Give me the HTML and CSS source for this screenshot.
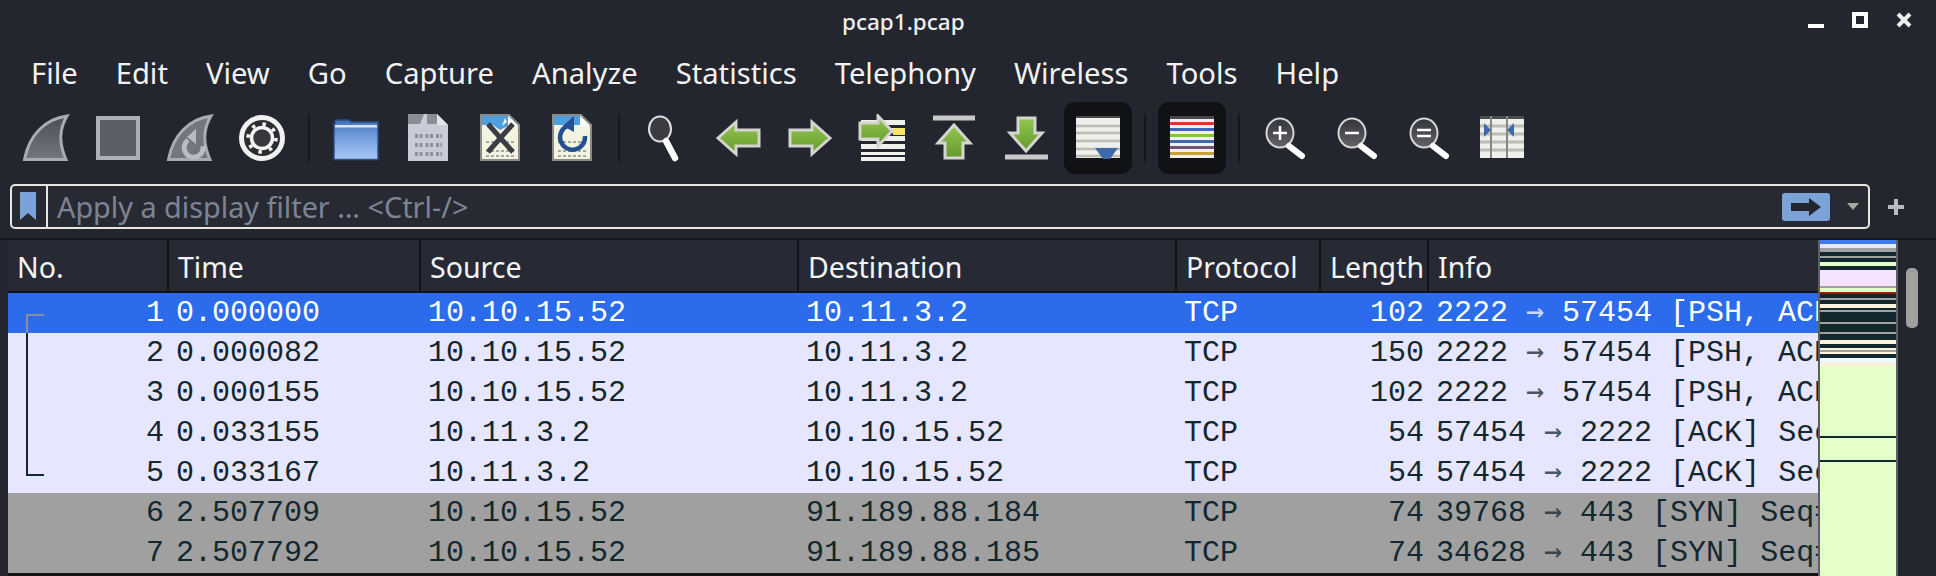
FILE: index.html
```html
<!DOCTYPE html>
<html lang="en">
<head>
<meta charset="utf-8">
<title>pcap1.pcap</title>
<link rel="stylesheet" href="styles.css">
</head>
<body>
<svg class="defs" width="0" height="0" aria-hidden="true">
  <defs>
    <linearGradient id="fin" x1="0" y1="0" x2="0" y2="1"><stop offset="0" stop-color="#4d4f58"/><stop offset="1" stop-color="#74767e"/></linearGradient>
    <linearGradient id="fold" x1="0" y1="0" x2="0" y2="1"><stop offset="0" stop-color="#3f70b8"/><stop offset=".35" stop-color="#6a97da"/><stop offset="1" stop-color="#a9c8f6"/></linearGradient>
    <linearGradient id="grn" x1="0" y1="0" x2="0" y2="1"><stop offset="0" stop-color="#94c653"/><stop offset="1" stop-color="#64992a"/></linearGradient>
    <linearGradient id="lens" x1="0" y1="0" x2="0" y2="1"><stop offset="0" stop-color="#33353b"/><stop offset="1" stop-color="#63646a"/></linearGradient>
  </defs>
</svg>
<div class="window">
  <header class="titlebar">
    <span class="title">pcap1.pcap</span>
    <div class="winctl">
      <svg width="16" height="16" viewBox="0 0 16 16"><rect y="12" width="16" height="4" fill="#fff"/></svg>
      <svg width="16" height="16" viewBox="0 0 16 16"><rect x="2" y="2" width="12" height="12" fill="none" stroke="#fff" stroke-width="4"/></svg>
      <svg width="16" height="16" viewBox="0 0 16 16"><path d="M2 2 14 14M14 2 2 14" stroke="#eee" stroke-width="4"/></svg>
    </div>
  </header>
  <nav class="menubar">
    <span>File</span><span>Edit</span><span>View</span><span>Go</span><span>Capture</span><span>Analyze</span><span>Statistics</span><span>Telephony</span><span>Wireless</span><span>Tools</span><span>Help</span>
  </nav>
  <div class="toolbar">
    <div class="tool"><svg class="ico" viewBox="0 0 48 48"><path d="M45 2C23 5 7 21 2.500 45.500H44C37 30 37 15 45 2Z" fill="url(#fin)" stroke="#a9abb5" stroke-width="3"/></svg></div>
    <div class="tool"><svg class="ico" viewBox="0 0 48 48"><rect x="4" y="4" width="40" height="40" fill="#5d5f67" stroke="#adb0bb" stroke-width="4"/></svg></div>
    <div class="tool"><svg class="ico" viewBox="0 0 48 48"><path d="M45 2C23 5 7 21 2.500 45.500H44C37 30 37 15 45 2Z" fill="#74767f" stroke="#a9abb5" stroke-width="3"/><path d="M22 26a9.500 9.500 0 1 0 15 6" fill="none" stroke="#b9bbc5" stroke-width="5"/><path d="M30 15v15l-9-7z" fill="#b9bbc5"/></svg></div>
    <div class="tool"><svg class="ico" viewBox="0 0 48 48"><circle cx="24" cy="24" r="20.500" fill="#2c2d31" stroke="#f1f1f1" stroke-width="5"/><circle cx="24" cy="24" r="10.500" fill="#37383c" stroke="#f4f4f4" stroke-width="3.500"/><circle cx="24" cy="24" r="14" fill="none" stroke="#f4f4f4" stroke-width="3.500" stroke-dasharray="3.500 7.500"/></svg></div>
    <div class="sep"></div>
    <div class="tool"><svg class="ico" viewBox="0 0 48 48"><path d="M3 10V7.500Q3 6 5 6H16Q18 6 19 8H46V45.500H2V10Z" fill="url(#fold)" stroke="#2c4f86" stroke-width="1.500"/><rect x="3" y="11" width="42" height="2.500" fill="#d9e6f8"/></svg></div>
    <div class="tool"><svg class="ico" viewBox="0 0 48 48"><path d="M4 0H33L44 11V47H4Z" fill="#c9cbd6"/><path d="M4 0H20L16 10H4ZM23 0H33L38 5 36 10H23Z" fill="#8c8d97"/><path d="M33 0 44 11H33Z" fill="#e4e5ec"/><path d="M11 21H38M11 23H38M11 30H38M11 32H38M11 39H38M11 41H38" stroke="#8f909a" stroke-width="2" stroke-dasharray="3 1.500 3 3"/></svg></div>
    <div class="tool"><svg class="ico" viewBox="0 0 48 48"><path d="M5 1H33L43 11V46H5Z" fill="#f2f3e0" stroke="#8a8b84" stroke-width="2"/><path d="M6 2H32L34 11 24 16 17 11H6Z" fill="#4d9fe0"/><path d="M29 4 26 12 31 8Z" fill="#f2f3e0"/><path d="M32 2 42 12H32Z" fill="#fff"/><path d="M10 28H38M10 37H38M10 42H38" stroke="#a7a89f" stroke-width="2" stroke-dasharray="3 2"/><path d="M12 10 37 38M37 10 12 38" stroke="#3a3d44" stroke-width="5"/></svg></div>
    <div class="tool"><svg class="ico" viewBox="0 0 48 48"><path d="M5 1H33L43 11V46H5Z" fill="#f2f3e0" stroke="#8a8b84" stroke-width="2"/><path d="M6 2H32L34 11H6Z" fill="#4d9fe0"/><path d="M32 2 42 12H32Z" fill="#fff"/><path d="M10 28H38M10 37H38M10 42H38" stroke="#a7a89f" stroke-width="2" stroke-dasharray="3 2"/><path d="M19 12A12.500 12.500 0 1 0 37 22" fill="none" stroke="#24508f" stroke-width="4.500"/><path d="M26 2V18L15 12Z" fill="#24508f"/></svg></div>
    <div class="sep"></div>
    <div class="tool"><svg class="ico" viewBox="0 0 48 48"><ellipse cx="18" cy="15" rx="11" ry="12.500" fill="#3a3c42" stroke="#dfdfdf" stroke-width="2"/><path d="M24 27 33 44" stroke="#fff" stroke-width="6.500" stroke-linecap="round"/></svg></div>
    <div class="tool"><svg class="ico" viewBox="0 0 48 48"><path class="arw" d="M4 24 22 8V16H45V32H22V40Z"/></svg></div>
    <div class="tool"><svg class="ico" viewBox="0 0 48 48"><path class="arw" d="M44 24 26 8V16H4V32H26V40Z"/></svg></div>
    <div class="tool"><svg class="ico" viewBox="0 0 48 48"><path d="M3 6H47V11H3ZM3 14H47V19H3ZM3 22H47V27H3ZM3 30H47V35H3ZM3 38H47V41H3ZM3 43H47V47H3Z" fill="#f0f0ec"/><rect x="35" y="14" width="12" height="7" fill="#f9e46c"/><path class="arw" d="M34 17 20 2V9H2V25H20V32Z"/></svg></div>
    <div class="tool"><svg class="ico" viewBox="0 0 48 48"><path d="M3 4H45" stroke="#c9c9c9" stroke-width="5"/><path class="arw" d="M24 11 40 29H33V44H15V29H8Z"/></svg></div>
    <div class="tool"><svg class="ico" viewBox="0 0 48 48"><path d="M3 43H46" stroke="#c9c9c9" stroke-width="5"/><path class="arw" d="M24 37 40 19H33V4H16V19H8Z"/></svg></div>
    <div class="tool on"><svg class="ico" viewBox="0 0 48 48"><rect x="2" y="2" width="44" height="42" fill="#efefeb"/><rect x="2" y="2" width="44" height="2" fill="#4a4b4f"/><path d="M2 12H46M2 19H46M2 27H46M2 35H46M2 42H46" stroke="#bcbdb5" stroke-width="2.500"/><path d="M21 34H44L36 45H29Z" fill="#3f6aa8"/></svg></div>
    <div class="sep"></div>
    <div class="tool on"><svg class="ico" viewBox="0 0 48 48"><rect x="2" y="2" width="44" height="42" fill="#efefeb"/><rect x="2" y="2" width="44" height="3" fill="#47484c"/><rect x="2" y="8" width="44" height="3" fill="#e0352b"/><rect x="2" y="14" width="44" height="3" fill="#3f68ae"/><rect x="2" y="20" width="44" height="3" fill="#86c23a"/><rect x="2" y="26" width="44" height="3" fill="#3f68ae"/><rect x="2" y="32" width="44" height="3" fill="#75507b"/><rect x="2" y="38" width="44" height="3" fill="#c4a035"/></svg></div>
    <div class="sep"></div>
    <div class="tool"><svg class="ico" viewBox="0 0 48 48"><ellipse cx="18" cy="19" rx="13.500" ry="14.500" fill="url(#lens)" stroke="#d5d5d5" stroke-width="2"/><path d="M27 32 40 42" stroke="#fff" stroke-width="6" stroke-linecap="round"/><path d="M11 19H25M18 12V26" stroke="#fff" stroke-width="2.500"/></svg></div>
    <div class="tool"><svg class="ico" viewBox="0 0 48 48"><ellipse cx="18" cy="19" rx="13.500" ry="14.500" fill="url(#lens)" stroke="#d5d5d5" stroke-width="2"/><path d="M27 32 40 42" stroke="#fff" stroke-width="6" stroke-linecap="round"/><path d="M11 19H25" stroke="#fff" stroke-width="2.500"/></svg></div>
    <div class="tool"><svg class="ico" viewBox="0 0 48 48"><ellipse cx="18" cy="19" rx="13.500" ry="14.500" fill="url(#lens)" stroke="#d5d5d5" stroke-width="2"/><path d="M27 32 40 42" stroke="#fff" stroke-width="6" stroke-linecap="round"/><path d="M11 16H25M11 22H25" stroke="#fff" stroke-width="2.500"/></svg></div>
    <div class="tool"><svg class="ico" viewBox="0 0 48 48"><rect x="2" y="2" width="44" height="42" fill="#efefeb"/><rect x="2" y="2" width="44" height="3" fill="#4a4b4f"/><path d="M2 12H46M2 20H46M2 28H46M2 36H46" stroke="#bcbdb5" stroke-width="3"/><path d="M13 2V44M29 2V44" stroke="#86877f" stroke-width="2"/><path d="M6 9 13 16 6 23ZM36 9 29 16 36 23Z" fill="#3f6aa8"/></svg></div>
  </div>
  <div class="filterrow">
    <div class="filterbox">
      <span class="bookmark"><svg width="16" height="28" viewBox="0 0 16 28"><path d="M0 0H16V28L8 21 0 28Z" fill="#7aa2d8"/></svg></span>
      <span class="placeholder">Apply a display filter … &lt;Ctrl-/&gt;</span>
      <span class="go"><svg width="30" height="18" viewBox="0 0 30 18"><path d="M0 5H18V0L30 9 18 18V13H0Z" fill="#23262f"/></svg></span>
      <span class="caret"></span>
    </div>
    <span class="plus"></span>
  </div>
  <div class="pane">
    <div class="packets">
      <div class="row head"><span>No.</span><span>Time</span><span>Source</span><span>Destination</span><span>Protocol</span><span>Length</span><span>Info</span></div>
      <div class="row sel"><span class="num">1</span><span>0.000000</span><span>10.10.15.52</span><span>10.11.3.2</span><span>TCP</span><span class="num">102</span><span>2222 <b class="ar">→</b> 57454 [PSH, ACK] Seq=1 Ack=1 Win=501</span><i class="tree first"></i></div>
      <div class="row pk"><span class="num">2</span><span>0.000082</span><span>10.10.15.52</span><span>10.11.3.2</span><span>TCP</span><span class="num">150</span><span>2222 <b class="ar">→</b> 57454 [PSH, ACK] Seq=37 Ack=1 Win=501</span><i class="tree mid"></i></div>
      <div class="row pk"><span class="num">3</span><span>0.000155</span><span>10.10.15.52</span><span>10.11.3.2</span><span>TCP</span><span class="num">102</span><span>2222 <b class="ar">→</b> 57454 [PSH, ACK] Seq=133 Ack=1 Win=501</span><i class="tree mid"></i></div>
      <div class="row pk"><span class="num">4</span><span>0.033155</span><span>10.11.3.2</span><span>10.10.15.52</span><span>TCP</span><span class="num">54</span><span>57454 <b class="ar">→</b> 2222 [ACK] Seq=1 Ack=133 Win=501</span><i class="tree mid"></i></div>
      <div class="row pk"><span class="num">5</span><span>0.033167</span><span>10.11.3.2</span><span>10.10.15.52</span><span>TCP</span><span class="num">54</span><span>57454 <b class="ar">→</b> 2222 [ACK] Seq=1 Ack=169 Win=501</span><i class="tree last"></i></div>
      <div class="row syn"><span class="num">6</span><span>2.507709</span><span>10.10.15.52</span><span>91.189.88.184</span><span>TCP</span><span class="num">74</span><span>39768 <b class="ar">→</b> 443 [SYN] Seq=0 Win=64240 Len=0</span></div>
      <div class="row syn"><span class="num">7</span><span>2.507792</span><span>10.10.15.52</span><span>91.189.88.185</span><span>TCP</span><span class="num">74</span><span>34628 <b class="ar">→</b> 443 [SYN] Seq=0 Win=64240 Len=0</span></div>
    </div>
    <div class="minimap"></div>
    <div class="scroll"><div class="thumb"></div></div>
  </div>
</div>
</body>
</html>
```
FILE: styles.css
```css
* { box-sizing: border-box; }
html, body { margin: 0; height: 576px; overflow: hidden; background: #23262e; }
.defs { position: absolute; }
.window { width: 1936px; height: 576px; display: flex; flex-direction: column; color: #f2f2f2; font-family: "Noto Sans", sans-serif; }
.titlebar { height: 42px; flex: none; position: relative; display: flex; justify-content: flex-end; align-items: flex-start; }
.title { position: absolute; left: 842px; top: 8px; font-size: 22.500px; line-height: 28px; font-weight: 500; color: #eee; }
.winctl { display: flex; gap: 28px; padding: 12px 24px 0 0; }
.winctl svg { display: block; }
.menubar { height: 60px; flex: none; display: flex; align-items: center; gap: 38px; padding: 1px 0 0 31px; font-size: 29.200px; }
.toolbar { height: 72px; flex: none; display: flex; padding-left: 10px; }
.tool { width: 72px; height: 72px; display: flex; align-items: center; justify-content: center; flex: none; }
.tool.on { width: 68px; margin: 0 2px; background: #111216; border-radius: 11px; }
.ico { width: 48px; height: 48px; display: block; }
.arw { fill: url(#grn); stroke: #d4d4d0; stroke-width: 3; }
.sep { width: 22px; flex: none; display: flex; justify-content: center; padding: 12px 0; }
.sep::before { content: ""; width: 2px; background: #15171c; }
.filterrow { margin-top: 10px; height: 45px; flex: none; display: flex; align-items: center; padding-left: 10px; }
.filterbox { width: 1860px; height: 45px; border: 2px solid #e8e6e0; border-radius: 5px; background: #282a33; display: flex; align-items: center; }
.bookmark { width: 36px; height: 41px; flex: none; border-right: 2px solid #e8e6e0; padding: 6px 0 0 8px; }
.bookmark svg { display: block; }
.placeholder { flex: 1; padding-left: 9px; font-size: 28.800px; color: #7d8494; white-space: nowrap; }
.go { width: 48px; height: 28px; background: #7ca3d8; border-radius: 3px; display: flex; align-items: center; justify-content: center; flex: none; }
.caret { width: 0; height: 0; margin: 0 9px 0 17px; border-left: 6px solid transparent; border-right: 6px solid transparent; border-top: 7px solid #a8a8a2; flex: none; }
.plus { width: 16px; height: 16px; margin-left: 18px; flex: none; background: linear-gradient(#b9bbc0, #b9bbc0) center / 16px 4px no-repeat, linear-gradient(#b9bbc0, #b9bbc0) center / 4px 16px no-repeat; }
.pane { margin-top: 9px; flex: 1; display: flex; padding-left: 8px; border-top: 2px solid #16181d; }
.packets { width: 1810px; flex: none; overflow: hidden; background: #12141a; }
.row { display: grid; grid-template-columns: 161px 252px 378px 378px 144px 108px 389px; height: 40px; position: relative; font-family: "Liberation Mono", monospace; font-size: 30px; line-height: 40px; color: #12272e; }
.row > span { padding-left: 7px; white-space: nowrap; overflow: hidden; }
.row > .num { padding: 0 5px 0 0; text-align: right; }
.ar { font-family: "DejaVu Sans Mono", monospace; font-weight: 400; opacity: .75; line-height: 0; }
.head { height: 53px; background: #272a35; color: #f4f4f4; font-family: "Noto Sans", sans-serif; font-size: 28.500px; line-height: 48px; border-bottom: 2px solid #111318; }
.head > span { padding: 3px 0 0 9px; border-right: 2px solid #111318; }
.head > span:first-child { padding-left: 9px; }
.head > span:last-child { border-right: 0; }
.sel { background: #2c6bec; color: #fff; }
.pk { background: #e7e6ff; }
.syn { background: #a0a0a0; }
.tree { position: absolute; left: 18px; width: 18px; border-left: 2px solid #12272e; }
.tree.first { top: 21px; bottom: -1px; border-top: 2px solid #8d8d95; border-left-color: #8d8d95; }
.tree.mid { top: 0; bottom: 0; }
.tree.last { top: 0; height: 23px; border-bottom: 2px solid #12272e; }
.minimap { width: 80px; flex: none; border-left: 2px solid #5c5e66; border-right: 2px solid #5c5e66; background: linear-gradient(to bottom,
  #3c7af0 0 4px, #e7e6ff 4px 8px, #a0a0a0 8px 12px, #12272e 12px 16px, #a0a0a0 16px 18px, #12272e 18px 22px, #e4ffc7 22px 26px, #12272e 26px 30px,
  #f4e2ff 30px 46px, #a0a0a0 46px 48px, #e4ffc7 48px 52px, #971a0c 52px 54px, #12272e 54px 58px, #a0a0a0 58px 60px, #12272e 60px 64px, #fdf4dc 64px 68px,
  #12272e 68px 70px, #a0a0a0 70px 72px, #12272e 72px 82px, #a0a0a0 82px 84px, #12272e 84px 92px, #a0a0a0 92px 94px, #12272e 94px 100px, #fdf4dc 100px 104px,
  #12272e 104px 108px, #fdf4dc 108px 110px, #a0a0a0 110px 112px, #fdf4dc 112px 114px, #12272e 114px 118px, #eef6ff 118px 122px, #f7f0df 122px 126px,
  #e4ffc7 126px 196px, #12272e 196px 198px, #e4ffc7 198px 220px, #12272e 220px 222px, #e4ffc7 222px); }
.scroll { width: 28px; flex: none; padding: 28px 0 0 8px; }
.thumb { width: 12px; height: 60px; border-radius: 5px; background: #a0a0a0; }
```
